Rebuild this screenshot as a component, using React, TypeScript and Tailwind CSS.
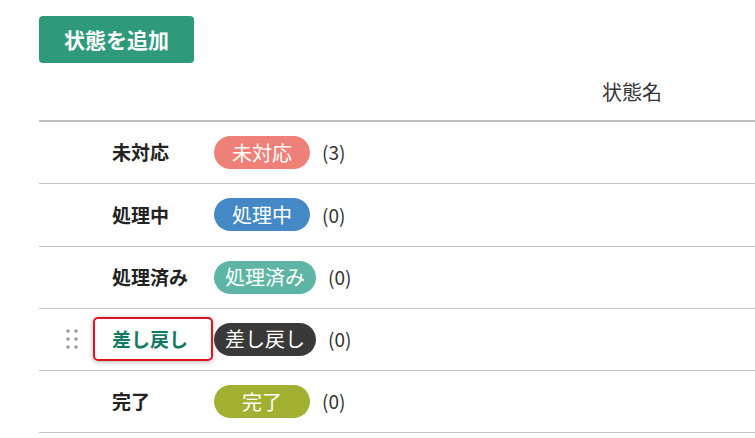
import React from "react";

const rows = [
  { name: "未対応", badge: "未対応", bg: "bg-[#ee8078]", count: 3, w: "w-[96px]" },
  { name: "処理中", badge: "処理中", bg: "bg-[#4488c5]", count: 0, w: "w-[96px]" },
  { name: "処理済み", badge: "処理済み", bg: "bg-[#5eb5a5]", count: 0, w: "w-[102px]" },
  { name: "差し戻し", badge: "差し戻し", bg: "bg-[#393939]", count: 0, w: "w-[102px]", active: true },
  { name: "完了", badge: "完了", bg: "bg-[#a1b030]", count: 0, w: "w-[96px]" },
];

function Handle() {
  return (
    <svg width="14" height="22" viewBox="0 0 14 22">
      {[0, 1, 2].map((r) =>
        [0, 1].map((c) => (
          <circle key={`${r}-${c}`} cx={3 + c * 8} cy={3 + r * 8} r={1.8} fill="#9a9a9a" />
        ))
      )}
    </svg>
  );
}

export default function App() {
  return (
    <div
      className="w-[755px] h-[438px] overflow-hidden bg-white pl-[39px] pt-[16px] text-[#222]"
      style={{ fontFamily: '"Noto Sans CJK JP", "Noto Sans", sans-serif' }}
    >
      <button className="w-[155px] h-[47px] rounded-[4px] bg-[#2e9a7a] text-white font-bold text-[21px] leading-none flex items-center justify-center">
        状態を追加
      </button>
      <div className="h-[57px] flex items-center pl-[563px] text-[20px] text-[#333]">状態名</div>
      <div className="border-t-2 border-[#bdbdbd]">
        {rows.map((r) => (
          <div key={r.name} className="h-[62.25px] border-b border-[#c4c4c4] flex items-center">
            <div className="w-[54px] flex justify-end pr-[14px]">{r.active ? <Handle /> : null}</div>
            <div
              className={
                r.active
                  ? "w-[120px] h-[44px] flex items-center pl-[17px] border-2 border-[#e0141e] rounded-[5px] shadow-[0_1px_5px_rgba(0,0,0,0.3)] text-[#137a62] font-bold text-[19px]"
                  : "w-[120px] flex items-center pl-[19px] font-bold text-[19px] text-[#222]"
              }
            >
              {r.name}
            </div>
            <div
              className={`${r.w} ml-[1px] h-[33px] rounded-full ${r.bg} text-white text-[20px] flex items-center justify-center leading-none`}
            >
              {r.badge}
            </div>
            <div className="ml-[12px] text-[19px] text-[#333]">({r.count})</div>
          </div>
        ))}
      </div>
    </div>
  );
}
